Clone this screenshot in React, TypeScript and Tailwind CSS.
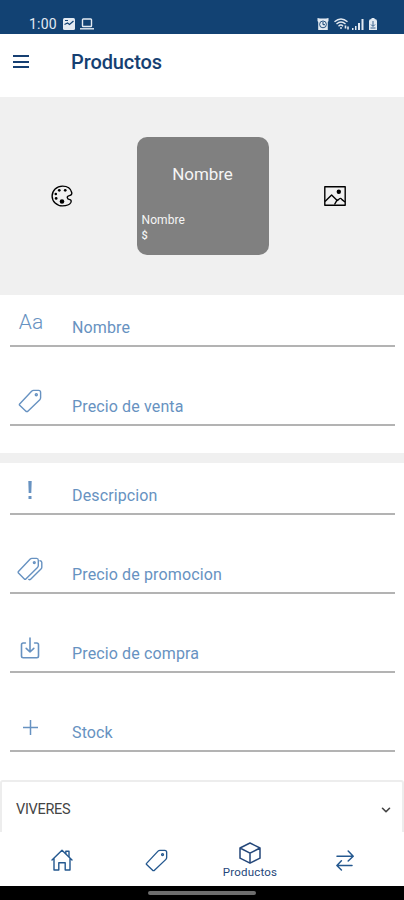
import React from "react";
import { ChevronDown } from "lucide-react";

interface IconProps {
  className?: string;
}

function TagIcon({ className }: IconProps) {
  return (
    <svg className={className} viewBox="0 0 24 24" fill="none" stroke="currentColor" strokeWidth="1.4" strokeLinejoin="round">
      <path d="M1.4 15.3 13.6 2.2Q14.4 1.4 15.6 1.4H20.6Q22.6 1.4 22.6 3.4V8.8Q22.6 10 21.8 10.8L9.6 22.5 8.2 22.5 1.4 15.9Z" />
      <circle cx="18.3" cy="5.8" r="1" />
    </svg>
  );
}

function TagsIcon({ className }: IconProps) {
  return (
    <svg className={className} viewBox="0 0 26 24" fill="none" stroke="currentColor" strokeWidth="1.4" strokeLinejoin="round" strokeLinecap="round">
      <path d="M1.2 14.8 13 2.2Q13.8 1.4 15 1.4H19.6Q21.3 1.4 21.3 3.2V8.4Q21.3 9.6 20.5 10.4L8.6 22.2H7.6L1.2 15.8Z" />
      <path d="M23 3.8Q24.8 4 24.8 5.6V10.2Q24.8 11.2 24 12L13.4 22.4Q12.7 23 11.8 22.4" />
      <circle cx="17.3" cy="5.6" r=".9" />
    </svg>
  );
}

function DownloadIcon({ className }: IconProps) {
  return (
    <svg className={className} viewBox="0 0 20 22" fill="none" stroke="currentColor" strokeWidth="1.6" strokeLinecap="round" strokeLinejoin="round">
      <path d="M5.4 6H3.2Q1.5 6 1.5 7.7V19Q1.5 20.7 3.2 20.7H16.8Q18.5 20.7 18.5 19V7.7Q18.5 6 16.8 6H14.6" />
      <path d="M10 1v14M6.2 11.4 10 15l3.8-3.6" />
    </svg>
  );
}

function PaletteIcon({ className }: IconProps) {
  return (
    <svg className={className} viewBox="0 0 24 24" fill="none" stroke="currentColor" strokeWidth="1.5">
      <path d="M20.6 16c-3.6-.6-3.8-3.6-.6-4.4 2.300-.5 3-1.600 2.600-3.400C21.600 3.800 17.500 1.200 12.500 1.200 6.200 1.200 1.200 6 1.200 12s5 10.800 11.300 10.800c4 0 7.600-.9 9-3.400.9-1.700.6-3.100-.9-3.400Z" />
      <g fill="currentColor" stroke="none">
        <circle cx="12" cy="18" r="2.5" />
        <circle cx="9" cy="5.8" r="1.5" />
        <circle cx="15.5" cy="5.8" r="1.5" />
        <circle cx="5.2" cy="9.8" r="1.4" />
        <circle cx="5.6" cy="14.6" r="1.5" />
      </g>
    </svg>
  );
}

function PictureIcon({ className }: IconProps) {
  return (
    <svg className={className} viewBox="0 0 22 20" fill="none" stroke="currentColor" strokeWidth="1.4" strokeLinejoin="round">
      <rect x=".8" y=".8" width="20.4" height="18.4" />
      <path d="M1 15.5 7.6 9 13.2 14.4M10.5 18.5 12.6 14.8 14.6 13.6Q16.2 11.2 18 13.6L21 16" />
      <circle cx="14.8" cy="5.8" r="1.5" fill="currentColor" />
    </svg>
  );
}

function HouseIcon({ className }: IconProps) {
  return (
    <svg className={className} viewBox="0 0 22 22" fill="none" stroke="currentColor" strokeWidth="1.4" strokeLinejoin="round" strokeLinecap="round">
      <path d="M1 11 11 1.2 21 11M3 9.5V21H7.8V13.8H14.2V21H19V9.5" />
      <path d="M14.8 4.4V2.2H18V7.6" />
    </svg>
  );
}

function BoxIcon({ className }: IconProps) {
  return (
    <svg className={className} viewBox="0 0 22 22" fill="none" stroke="currentColor" strokeWidth="1.5" strokeLinejoin="round">
      <path d="M11 1 21 6V16.2L11 21.2 1 16.2V6ZM1 6 11 11.2 21 6M11 11.2V21.2" />
    </svg>
  );
}

function TransferIcon({ className }: IconProps) {
  return (
    <svg className={className} viewBox="0 0 18 21" fill="none" stroke="currentColor" strokeWidth="1.5" strokeLinejoin="round" strokeLinecap="round">
      <path d="M1 6.2H17M12.2 1 17.2 6.2 12.2 11M16 15.4H1M5.4 10.8.9 15.4 5.4 20" />
    </svg>
  );
}

function StatusBar() {
  return (
    <header className="flex h-[33.5px] items-end justify-between bg-[#124273] pr-[27px] pb-[4px] pl-[29px] text-[#e3eaf2]">
      <div className="flex items-center">
        <span className="w-[34px] text-[14px] leading-[12px] tracking-[0.2px]">1:00</span>
        <svg className="h-3 w-3" viewBox="0 0 12 12">
          <rect width="12" height="12" rx="1.5" fill="currentColor" />
          <path d="M1.5 6.5 4.5 5l2 1.500L10.500 3M2 2.500h3" fill="none" stroke="#124273" strokeWidth="1.2" />
        </svg>
        <svg className="ml-[5px] h-3 w-[14px]" viewBox="0 0 14 12" fill="none" stroke="currentColor" strokeWidth="1.4">
          <rect x="2.5" y="1" width="9" height="7.5" rx=".8" />
          <path d="M0 10.8h14" />
        </svg>
      </div>
      <div className="flex items-center">
        <svg className="h-3 w-3" viewBox="0 0 12 12" fill="none">
          <path d="M.5 0 3 .5h6L11.5 0V3L10.8 4V12H1.2V4L.5 3Z" fill="currentColor" />
          <circle cx="6" cy="6.4" r="3.4" stroke="#124273" strokeWidth=".9" />
          <path d="M6 4v2.700h2" stroke="#124273" />
        </svg>
        <svg className="ml-[5px] h-3 w-4" viewBox="0 0 16 12" fill="none" stroke="currentColor" strokeWidth="1.4">
          <path d="M.5 3.8Q7 -1.8 13.5 3.8M2.5 6Q7 2 11.5 6M4.5 8.2Q7 6 9 8.2M7 9v2" />
          <path d="M11.5 7.5v3M14 8.5v3" strokeWidth="1.6" />
        </svg>
        <svg className="ml-[2px] h-3 w-3" viewBox="0 0 12 12" fill="currentColor">
          <path d="M0 10h1.5v2H0zM3 8h1.5v4H3zM6 5h2v7H6zM9.5 1h2v11h-2z" />
        </svg>
        <svg className="ml-[5px] h-3 w-2" viewBox="0 0 8 12">
          <path d="M2.5 0h3v1Q8 1 8 3v9H0V3Q0 1 2.5 1Z" fill="currentColor" />
          <path d="M4 3v5M2 6.5l2 2 2-2M1.5 10h5" stroke="#124273" strokeWidth=".8" fill="none" />
        </svg>
      </div>
    </header>
  );
}

interface FieldProps {
  label: string;
  icon: React.ReactNode;
}

function Field({ label, icon }: FieldProps) {
  return (
    <label className="mr-[9px] ml-[10px] flex h-[52px] border-b-2 border-[#b3b3b3] text-[#6792c1]">
      <span className="flex h-[54px] w-[62px] shrink-0 items-center pl-[7px]">
        <span className="flex w-[26px] justify-center">{icon}</span>
      </span>
      <span className="pt-[21px] text-[16px] leading-[24px] tracking-[0.13px]">{label}</span>
    </label>
  );
}

export default function App() {
  return (
    <div className="flex h-[900px] w-[404px] flex-col overflow-hidden bg-white font-['Roboto',sans-serif]">
      <StatusBar />

      <div className="flex h-[63.5px] shrink-0 items-center pb-[7px] pl-[12.5px] text-[#163f72]">
        <button className="flex w-[58.5px] flex-col gap-[3.5px]" aria-label="Menu">
          <span className="h-[2px] w-4 bg-[#163f72]" />
          <span className="h-[2px] w-4 bg-[#163f72]" />
          <span className="h-[2px] w-4 bg-[#163f72]" />
        </button>
        <h1 className="text-[20px] leading-6 font-medium tracking-[-0.1px]">Productos</h1>
      </div>

      {/* Product preview */}
      <section className="flex h-[197.5px] shrink-0 items-center justify-between bg-[#f0f0f0] pr-[58px] pl-[51px] text-black">
        <PaletteIcon className="h-[22px] w-[22px]" />
        <div className="ml-[8px] flex h-[118px] w-[132px] flex-col rounded-[10px] bg-[#808080] px-[5px] text-[#f5f5f5]">
          <p className="mt-[25px] text-center text-[17px] leading-6 tracking-[-0.1px]">Nombre</p>
          <p className="mt-[26px] text-[12px] leading-4 tracking-[0.1px]">Nombre</p>
          <p className="text-[11px] leading-4 font-medium">$</p>
        </div>
        <PictureIcon className="h-5 w-[22px]" />
      </section>

      <section className="flex h-[158.5px] shrink-0 flex-col gap-[27px]">
        <Field label="Nombre" icon={<span className="ml-[2px] text-[21px] leading-6 font-light">Aa</span>} />
        <Field label="Precio de venta" icon={<TagIcon className="h-6 w-6" />} />
      </section>

      <div className="h-[10px] shrink-0 bg-[#f0f0f0]" />

      <section className="flex h-[317px] shrink-0 flex-col gap-[27px]">
        <Field
          label="Descripcion"
          icon={
            <svg className="h-[20px] w-[6px]" viewBox="0 0 6 20" fill="currentColor">
              <path d="M1.3 1h3.4l-.4 12H1.7zM1.5 16h3v3h-3z" />
            </svg>
          }
        />
        <Field label="Precio de promocion" icon={<TagsIcon className="h-6 w-[26px]" />} />
        <Field label="Precio de compra" icon={<DownloadIcon className="h-[22px] w-[20px]" />} />
        <Field
          label="Stock"
          icon={
            <svg className="h-[15px] w-[15px]" viewBox="0 0 15 15" stroke="currentColor" strokeWidth="1.5">
              <path d="M7.5 0v15M0 7.5h15" />
            </svg>
          }
        />
      </section>

      <button className="flex h-[52px] shrink-0 items-center justify-between rounded-t-[3px] border-x-2 border-t-2 border-[#ededed] pt-[6px] pr-[10px] pl-[14px] text-[#444]">
        <span className="text-[14.5px] leading-5 tracking-[-0.3px]">VIVERES</span>
        <ChevronDown size={14} strokeWidth={2.8} className="-mr-[1px]" />
      </button>

      <nav className="flex h-[54px] shrink-0 pr-[12px] pl-[15px] text-[#24588f]">
        <a className="flex w-[94px] items-center justify-center">
          <HouseIcon className="mt-[2px] h-[22px] w-[22px]" />
        </a>
        <a className="flex w-[94px] items-center justify-center">
          <TagIcon className="mt-[2px] h-[23px] w-[23px]" />
        </a>
        <a className="flex w-[94px] flex-col items-center pt-[10px] text-[#24477a]">
          <BoxIcon className="h-[22px] w-[22px]" />
          <span className="mt-[1px] text-[11.5px] leading-[15px] tracking-[0.2px]">Productos</span>
        </a>
        <a className="flex w-[95px] items-center justify-center">
          <TransferIcon className="mt-[2px] h-[21px] w-[18px]" />
        </a>
      </nav>

      <footer className="flex h-[14px] shrink-0 justify-center bg-black pt-[5px]">
        <span className="h-[4px] w-[108px] rounded-full bg-[#6e6e6e]" />
      </footer>
    </div>
  );
}
